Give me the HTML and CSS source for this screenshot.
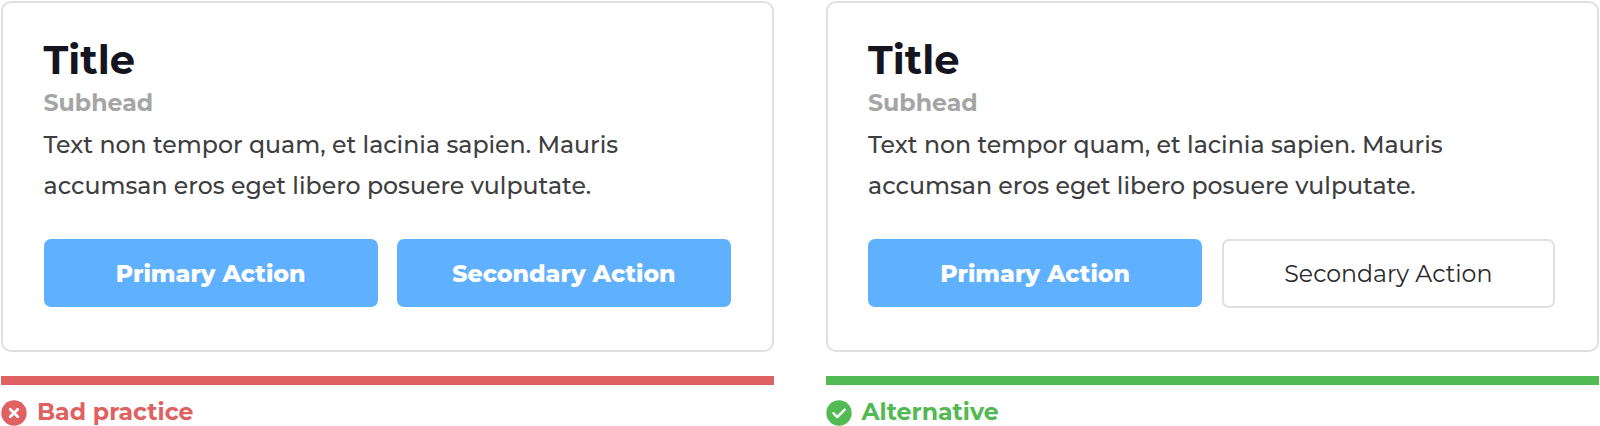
FILE: index.html
```html
<!DOCTYPE html>
<html lang="en">
<head>
  <meta charset="UTF-8">
  <meta name="viewport" content="width=device-width, initial-scale=1.0">
  <title>Button hierarchy</title>
  <link rel="stylesheet" href="styles.css">
</head>
<body>
  <main class="comparison">
    <section class="example bad">
      <div class="card">
        <h2 class="title">Title</h2>
        <div class="subhead">Subhead</div>
        <p class="text">Text non tempor quam, et lacinia sapien. Mauris<br>accumsan eros eget libero posuere vulputate.</p>
        <div class="actions">
          <button class="btn btn-primary">Primary Action</button>
          <button class="btn btn-primary">Secondary Action</button>
        </div>
      </div>
      <div class="bar"></div>
      <div class="verdict">
        <svg class="icon" viewBox="0 0 26 26">
          <circle cx="13" cy="13" r="12.7" fill="currentColor"/>
          <path d="M9.2 9.2l7.6 7.6M16.8 9.2l-7.6 7.6" fill="none" stroke="#fff" stroke-width="2.7" stroke-linecap="round"/>
        </svg>
        <span>Bad practice</span>
      </div>
    </section>

    <section class="example good">
      <div class="card">
        <h2 class="title">Title</h2>
        <div class="subhead">Subhead</div>
        <p class="text">Text non tempor quam, et lacinia sapien. Mauris<br>accumsan eros eget libero posuere vulputate.</p>
        <div class="actions">
          <button class="btn btn-primary">Primary Action</button>
          <button class="btn btn-outline">Secondary Action</button>
        </div>
      </div>
      <div class="bar"></div>
      <div class="verdict">
        <svg class="icon" viewBox="0 0 26 26">
          <circle cx="13" cy="13" r="12.7" fill="currentColor"/>
          <path d="M7.4 13.2l3.8 3.9 7.5-7.5" fill="none" stroke="#fff" stroke-width="2.4" stroke-linecap="round" stroke-linejoin="round"/>
        </svg>
        <span>Alternative</span>
      </div>
    </section>
  </main>
</body>
</html>
```
FILE: styles.css
```css
:root {
  --blue: #5FB0FF;
  --red: #E06161;
  --green: #52BA52;
  --border: #E0E0E2;
  --text-heading: #14151F;
  --text-primary: #3E3E40;
  --text-muted: #A5A5A5;
}

* {
  box-sizing: border-box;
}

body {
  margin: 0;
  background-color: #fff;
  font-family: Montserrat, Inter, sans-serif;
  font-size: 23.65px;
  color: var(--text-primary);
}

.comparison {
  display: grid;
  grid-template-columns: 773px 773px;
  column-gap: 51.5px;
  padding: 1px 1px 0;
  height: 426px;
  overflow: hidden;
}

.card {
  height: 351px;
  padding: 33px 41px 0 40.5px;
  border: 2px solid var(--border);
  border-radius: 10px;
}

.title {
  margin: 0;
  font-size: 40px;
  line-height: 48px;
  font-weight: 700;
  color: var(--text-heading);
}

.subhead {
  margin-top: 1px;
  line-height: 36px;
  font-weight: 700;
  color: var(--text-muted);
}

.text {
  margin: 4px 0 0;
  line-height: 40.5px;
  font-weight: 500;
  color: var(--text-primary);
  white-space: nowrap;
}

.actions {
  display: grid;
  grid-template-columns: 1fr 1fr;
  gap: 19px;
  margin-top: 33px;
  width: 687.5px;
}

.btn {
  height: 68px;
  padding: 0;
  border: none;
  border-radius: 7px;
  font: inherit;
  white-space: nowrap;
}

.btn-primary {
  background-color: var(--blue);
  color: #fff;
  font-weight: 800;
}

.btn-outline {
  height: 69px;
  margin-left: 1px;
  margin-right: 1px;
  padding-bottom: 1px;
  background-color: #fff;
  border: 2px solid var(--border);
  color: #2A2A2C;
  font-weight: 400;
}

.bar {
  height: 9px;
  margin-top: 24px;
  background-color: currentColor;
}

.bad {
  color: var(--red);
}

.good {
  color: var(--green);
}

.verdict {
  display: flex;
  align-items: center;
  gap: 10px;
  height: 26px;
  margin-top: 15px;
  font-weight: 700;
  line-height: 26px;
}

.verdict span {
  padding-bottom: 2px;
}

.icon {
  width: 26px;
  height: 26px;
}
```
